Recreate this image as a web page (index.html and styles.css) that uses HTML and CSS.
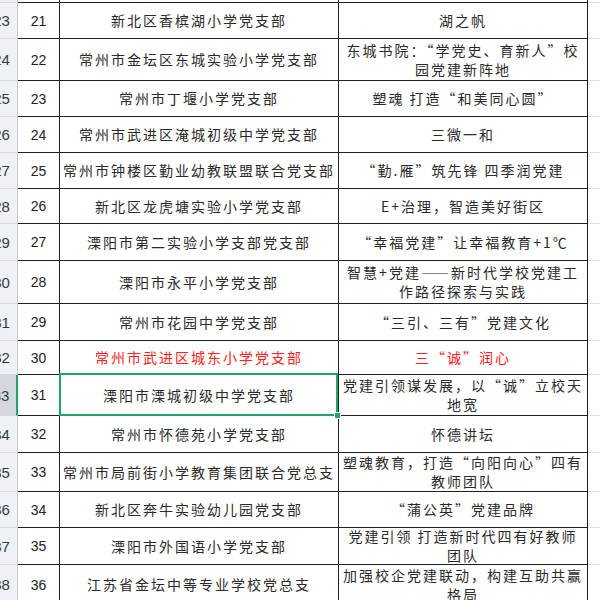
FILE: index.html
```html
<!DOCTYPE html>
<html lang="zh-CN">
<head>
<meta charset="utf-8">
<link rel="stylesheet" href="styles.css">
</head>
<body>
<div class="sheet">
  <div class="row h21"><div class="hdr"></div><div class="c num"></div><div class="c name"></div><div class="c brand"></div><div class="c empty"></div></div>
  <div class="row h36"><div class="hdr">23</div><div class="c num">21</div><div class="c name">新北区香槟湖小学党支部</div><div class="c brand">湖之帆</div><div class="c empty"></div></div>
  <div class="row h42"><div class="hdr">24</div><div class="c num">22</div><div class="c name">常州市金坛区东城实验小学党支部</div><div class="c brand">东城书院：“学党史、育新人”校<br>园党建新阵地</div><div class="c empty"></div></div>
  <div class="row h36"><div class="hdr">25</div><div class="c num">23</div><div class="c name">常州市丁堰小学党支部</div><div class="c brand">塑魂 打造“和美同心圆”</div><div class="c empty"></div></div>
  <div class="row h36"><div class="hdr">26</div><div class="c num">24</div><div class="c name">常州市武进区淹城初级中学党支部</div><div class="c brand">三微一和</div><div class="c empty"></div></div>
  <div class="row h36"><div class="hdr">27</div><div class="c num">25</div><div class="c name">常州市钟楼区勤业幼教联盟联合党支部</div><div class="c brand">“勤.雁”筑先锋 四季润党建</div><div class="c empty"></div></div>
  <div class="row h35"><div class="hdr">28</div><div class="c num">26</div><div class="c name">新北区龙虎塘实验小学党支部</div><div class="c brand">E+治理，智造美好街区</div><div class="c empty"></div></div>
  <div class="row h37"><div class="hdr">29</div><div class="c num">27</div><div class="c name">溧阳市第二实验小学支部党支部</div><div class="c brand">“幸福党建”让幸福教育+1℃</div><div class="c empty"></div></div>
  <div class="row h43"><div class="hdr">30</div><div class="c num">28</div><div class="c name">溧阳市永平小学党支部</div><div class="c brand">智慧+党建——新时代学校党建工<br>作路径探索与实践</div><div class="c empty"></div></div>
  <div class="row h37"><div class="hdr">31</div><div class="c num">29</div><div class="c name">常州市花园中学党支部</div><div class="c brand">“三引、三有”党建文化</div><div class="c empty"></div></div>
  <div class="row h34"><div class="hdr">32</div><div class="c num">30</div><div class="c name red">常州市武进区城东小学党支部</div><div class="c brand red">三“诚”润心</div><div class="c empty"></div></div>
  <div class="row h41"><div class="hdr on">33</div><div class="c num">31</div><div class="c name sel">溧阳市溧城初级中学党支部</div><div class="c brand">党建引领谋发展，以“诚”立校天<br>地宽</div><div class="c empty"></div></div>
  <div class="row h37"><div class="hdr">34</div><div class="c num">32</div><div class="c name">常州市怀德苑小学党支部</div><div class="c brand">怀德讲坛</div><div class="c empty"></div></div>
  <div class="row h39"><div class="hdr">35</div><div class="c num">33</div><div class="c name">常州市局前街小学教育集团联合党总支</div><div class="c brand">塑魂教育，打造“向阳向心”四有<br>教师团队</div><div class="c empty"></div></div>
  <div class="row h36"><div class="hdr">36</div><div class="c num">34</div><div class="c name">新北区奔牛实验幼儿园党支部</div><div class="c brand">“蒲公英”党建品牌</div><div class="c empty"></div></div>
  <div class="row h37"><div class="hdr">37</div><div class="c num">35</div><div class="c name">溧阳市外国语小学党支部</div><div class="c brand">党建引领 打造新时代四有好教师<br>团队</div><div class="c empty"></div></div>
  <div class="row h40"><div class="hdr">38</div><div class="c num">36</div><div class="c name">江苏省金坛中等专业学校党总支</div><div class="c brand">加强校企党建联动，构建互助共赢<br>格局</div><div class="c empty"></div></div>
</div>
</body>
</html>
```
FILE: styles.css
```css
html, body {
  margin: 0;
  padding: 0;
  background: #ffffff;
  overflow: hidden;
}

.sheet {
  margin-left: -14px;
  margin-top: -18px;
  width: 640px;
  font-family: "Noto Sans CJK SC", "Liberation Sans", sans-serif;
  color: #222222;
}

.row {
  display: grid;
  grid-template-columns: 32px 42px 279px 249px 52px;
}

.h21 { height: 21px; }
.h34 { height: 34px; }
.h35 { height: 35px; }
.h36 { height: 36px; }
.h37 { height: 37px; }
.h39 { height: 39px; }
.h40 { height: 40px; }
.h41 { height: 41px; }
.h42 { height: 42px; }
.h43 { height: 43px; }

.row > div {
  box-sizing: border-box;
  display: flex;
  align-items: center;
  justify-content: center;
  text-align: center;
  white-space: nowrap;
}

.hdr {
  background: #eef1f5;
  border-right: 1px solid #c2c7cf;
  border-bottom: 1px solid #d6dae0;
  color: #3a3a3a;
  font-family: "Liberation Sans", "DejaVu Sans", sans-serif;
  font-size: 15px;
}

.hdr.on {
  background: #d4d8de;
  border-right: 2px solid #23a566;
}

.c {
  border-right: 1px solid #1f1f1f;
  border-bottom: 1px solid #1f1f1f;
}

.num {
  font-family: "Liberation Sans", "DejaVu Sans", sans-serif;
  font-size: 14px;
}

.name, .brand {
  font-size: 14px;
  letter-spacing: 2px;
  line-height: 19px;
  color: #2a2a2a;
}

.brand {
  overflow: hidden;
}

.name.red, .brand.red {
  color: #ff2020;
}

.empty {
  border-right: 1px solid #e1e3e7 !important;
  border-bottom: 1px solid #dfe2e6 !important;
}

.sel {
  position: relative;
}

.sel::after {
  content: "";
  position: absolute;
  left: -1px;
  top: -2px;
  right: 0;
  bottom: -1px;
  border: 2px solid #23a566;
  z-index: 2;
}

.sel::before {
  content: "";
  position: absolute;
  right: -3px;
  bottom: -4px;
  width: 5px;
  height: 5px;
  background: #23a566;
  border: 1px solid #ffffff;
  z-index: 3;
}
```
